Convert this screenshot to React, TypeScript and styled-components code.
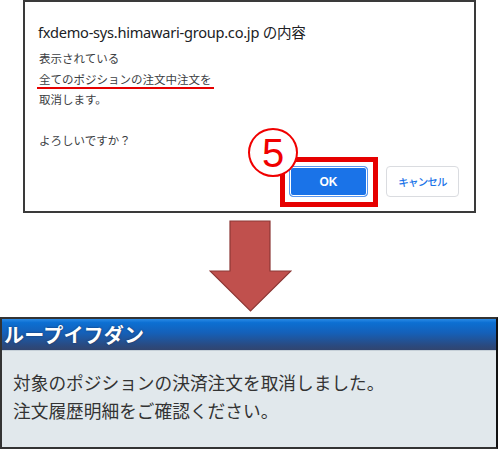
import React from 'react';
import styled, { createGlobalStyle } from 'styled-components';

const GlobalStyle = createGlobalStyle`
  html, body { margin: 0; padding: 0; background: #ffffff; }
  body {
    width: 500px;
    height: 450px;
    overflow: hidden;
    font-family: "Noto Sans", "Noto Sans CJK JP", sans-serif;
  }
`;

const Page = styled.div`
  display: flex;
  flex-direction: column;
  width: 500px;
  height: 450px;
`;

const Dialog = styled.section`
  box-sizing: border-box;
  margin-left: 23px;
  width: 453px;
  height: 213px;
  border: 2px solid #3a3a3a;
  background: #ffffff;
  display: flex;
  flex-direction: column;
  padding: 20px 14px 14px 13px;
`;

const DialogTitle = styled.div`
  font-family: "Noto Sans", "Noto Sans CJK JP", sans-serif;
  font-size: 14.6px;
  line-height: 20px;
  color: #202124;
  letter-spacing: -0.25px;
`;

const Message = styled.div`
  margin-top: 6px;
  padding-left: 1px;
  font-family: "Noto Sans CJK JP", sans-serif;
  font-size: 11.5px;
  line-height: 20.5px;
  color: #3c4043;
`;

const Line = styled.div<{ $gapBefore?: boolean }>`
  margin-top: ${(p) => (p.$gapBefore ? '20.5px' : '0')};
`;

const Marked = styled.span`
  display: inline-block;
  margin: 0 -2px;
  padding: 0 2px;
  box-shadow: inset 0 -2px 0 #e60000;
`;

const ButtonRow = styled.div`
  margin-top: auto;
  display: flex;
  justify-content: flex-end;
  gap: 18px;
  padding-right: 1px;
`;

const OkWrap = styled.div`
  position: relative;
  display: flex;
`;

const OkButton = styled.button`
  box-sizing: border-box;
  width: 79px;
  height: 31px;
  border: 1px solid #5a97ee;
  border-radius: 4px;
  background: #1a73e8;
  box-shadow: inset 0 0 0 1px #ffffff, inset 0 0 0 2px #1a73e8;
  color: #ffffff;
  font-family: "Liberation Sans", sans-serif;
  font-weight: 700;
  font-size: 12px;
  padding: 0;
`;

const CancelButton = styled.button`
  box-sizing: border-box;
  width: 73px;
  height: 31px;
  border: 1px solid #dadce0;
  border-radius: 4px;
  background: #ffffff;
  color: #1a73e8;
  font-family: "Noto Sans CJK JP", sans-serif;
  font-weight: 500;
  font-size: 10.5px;
  letter-spacing: -0.8px;
  padding: 0;
`;

const Frame = styled.div`
  position: absolute;
  left: -9px;
  top: -9px;
  width: 98px;
  height: 50px;
  box-sizing: border-box;
  border: 5px solid #e60000;
  z-index: 1;
  pointer-events: none;
`;

const StepBadge = styled.div`
  position: absolute;
  left: -41px;
  top: -38px;
  width: 50px;
  height: 49px;
  box-sizing: border-box;
  border: 2px solid #f00000;
  border-radius: 50%;
  background: #ffffff;
  color: #f00000;
  font-family: "Liberation Sans", sans-serif;
  font-size: 40px;
  line-height: 1;
  display: flex;
  align-items: center;
  justify-content: center;
  z-index: 2;
`;

const ArrowRow = styled.div`
  box-sizing: border-box;
  height: 104px;
  padding-top: 7px;
  display: flex;
  justify-content: center;
`;

const Panel = styled.section`
  box-sizing: border-box;
  width: 498px;
  height: 132px;
  border: 2px solid #333333;
  border-right-color: #111111;
  background: #e1e8ec;
  display: flex;
  flex-direction: column;
`;

const PanelHeader = styled.div`
  height: 31px;
  display: flex;
  align-items: center;
  padding-left: 2px;
  background: linear-gradient(to bottom, #2a8ae6 0%, #0c6fd2 12%, #1560b8 45%, #2a4a80 85%, #31456f 100%);
  border-bottom: 1px solid #c6d0d8;
  color: #ffffff;
  font-family: "Noto Sans CJK JP", sans-serif;
  font-weight: 700;
  font-size: 20px;
  letter-spacing: 0.2px;
  text-shadow: 0 0 2px #1b2f55;
`;

const PanelBody = styled.div`
  padding: 17px 11px;
  font-family: "Noto Sans CJK JP", sans-serif;
  font-size: 17.7px;
  line-height: 28px;
  color: #333333;
`;

const Arrow = () => (
  <svg width="83" height="93" viewBox="0 0 83 93">
    <path
      d="M21 1 H61 V51 H82 L41.5 91 L1 51 H21 Z"
      fill="#c0504d"
      stroke="#8c3836"
      strokeWidth="1.2"
      strokeLinejoin="miter"
    />
  </svg>
);

export default function App() {
  return (
    <>
      <GlobalStyle />
      <Page>
        <Dialog>
          <DialogTitle>fxdemo-sys.himawari-group.co.jp の内容</DialogTitle>
          <Message>
            <Line>表示されている</Line>
            <Line>
              <Marked>全てのポジションの注文中注文を</Marked>
            </Line>
            <Line>取消します。</Line>
            <Line $gapBefore>よろしいですか？</Line>
          </Message>
          <ButtonRow>
            <OkWrap>
              <OkButton>OK</OkButton>
              <Frame />
              <StepBadge>5</StepBadge>
            </OkWrap>
            <CancelButton>キャンセル</CancelButton>
          </ButtonRow>
        </Dialog>
        <ArrowRow>
          <Arrow />
        </ArrowRow>
        <Panel>
          <PanelHeader>ループイフダン</PanelHeader>
          <PanelBody>
            <div>対象のポジションの決済注文を取消しました。</div>
            <div>注文履歴明細をご確認ください。</div>
          </PanelBody>
        </Panel>
      </Page>
    </>
  );
}
